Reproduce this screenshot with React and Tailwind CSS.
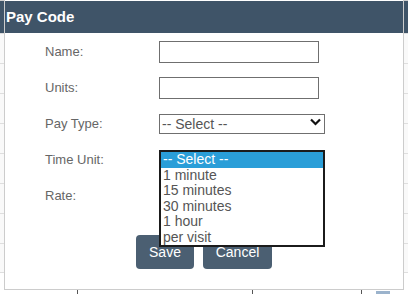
import React from 'react';

const rows = [
  { label: 'Name:', kind: 'input' },
  { label: 'Units:', kind: 'input' },
  { label: 'Pay Type:', kind: 'select' },
  { label: 'Time Unit:', kind: 'list' },
  { label: 'Rate:', kind: 'input' },
];

const timeUnits = ['-- Select --', '1 minute', '15 minutes', '30 minutes', '1 hour', 'per visit'];

function Chevron() {
  return (
    <svg className="pointer-events-none absolute right-[4px] top-[6px] h-[8px] w-[11px]" viewBox="0 0 11 8" fill="none">
      <path d="M1 1.5 L5.5 6 L10 1.5" stroke="#111" strokeWidth="2.2" />
    </svg>
  );
}

function Field({ kind }) {
  if (kind === 'input') {
    return <input type="text" className="h-[22px] w-[160px] border border-[#6f6f6f] bg-white px-1 outline-none" />;
  }
  if (kind === 'select') {
    return (
      <div className="relative w-[166px]">
        <select className="h-[20px] w-full appearance-none rounded-none border border-[#6f6f6f] bg-white pl-[2px] text-[14px] leading-[18px] text-[#555] outline-none">
          <option>-- Select --</option>
        </select>
        <Chevron />
      </div>
    );
  }
  return (
    <div className="relative h-[22px] w-[166px]">
      <div className="absolute left-0 top-[1px] z-10 w-[166px] border-2 border-[#1b1b1b] bg-white">
        {timeUnits.map((t, i) => (
          <div
            key={t}
            className={`h-[15.5px] pl-[2px] text-[14px] leading-[15px] ${
              i === 0 ? 'bg-[#2a9ed8] text-white' : 'text-[#555]'
            }`}
          >
            {t}
          </div>
        ))}
      </div>
    </div>
  );
}

export default function App() {
  return (
    <div className="relative h-[294px] w-[408px] overflow-hidden bg-white font-['Liberation_Sans',Arial,sans-serif]">
      {/* page behind the dialog */}
      <div className="absolute inset-0 flex flex-col">
        <div className="h-[1px] bg-[#cfcfcf]" />
        <div className="h-[32px] bg-[#3f5468]" />
        {Array.from({ length: 8 }).map((_, i) => (
          <div key={i} className="h-[30px] shrink-0 border-t border-[#dedede] bg-[#f9f9f9] last:border-b" />
        ))}
      </div>
      <div className="absolute bottom-0 left-0 h-[4px] w-full">
        <div className="absolute left-[77px] top-0 h-[4px] w-px bg-[#555]" />
        <div className="absolute left-[252px] top-0 h-[4px] w-px bg-[#555]" />
        <div className="absolute left-[361px] top-0 h-[4px] w-px bg-[#555]" />
        <div className="absolute left-[376px] top-[1px] h-[3px] w-[14px] bg-[#9bb3cc]" />
      </div>

      {/* dialog */}
      <div className="absolute left-[4px] top-0 flex h-[290px] w-[400px] flex-col border-x border-b border-[#cccccc] bg-white">
        <div className="mt-[1px] flex h-[32px] items-center bg-[#3f5468] px-[1px] text-[15px] font-bold text-white">
          Pay Code
        </div>
        <div className="flex flex-col gap-[14px] pl-[40px] pt-[8px]">
          {rows.map((r) => (
            <div key={r.label} className="flex h-[22px] items-center">
              <span className="w-[114px] text-[13px] text-[#666]">{r.label}</span>
              <Field kind={r.kind} />
            </div>
          ))}
        </div>
        <div className="mt-[28px] flex justify-center gap-[9px]">
          <button className="h-[34px] w-[58px] rounded-[4px] bg-[#4b5f72] text-[14px] text-white">Save</button>
          <button className="h-[34px] w-[69px] rounded-[4px] bg-[#4b5f72] text-[14px] text-white">Cancel</button>
        </div>
      </div>
    </div>
  );
}
